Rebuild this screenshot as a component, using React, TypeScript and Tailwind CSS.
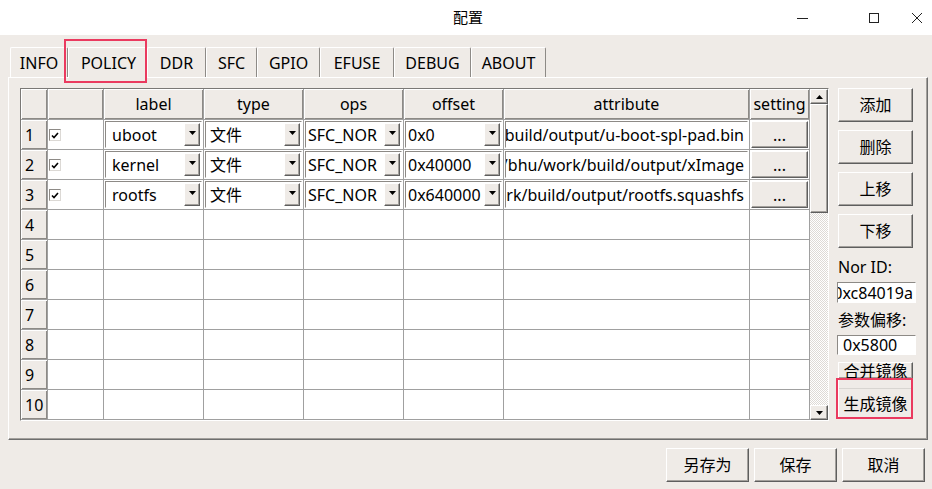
import React from 'react'

const FONT = "font-['Noto_Sans','Noto_Sans_CJK_SC',sans-serif]"
const RAISED =
  'bg-[#efebe7] border border-t-white border-l-white border-r-[#5e5e5e] border-b-[#5e5e5e] shadow-[inset_-1px_-1px_0_#a3a09c]'
const SUNKEN =
  'bg-white border border-t-[#8d8a86] border-l-[#8d8a86] border-r-white border-b-white'

const rows = [
  { label: 'uboot', type: '文件', ops: 'SFC_NOR', offset: '0x0', attr: '/home/bhu/work/build/output/u-boot-spl-pad.bin' },
  { label: 'kernel', type: '文件', ops: 'SFC_NOR', offset: '0x40000', attr: '/home/bhu/work/build/output/xImage' },
  { label: 'rootfs', type: '文件', ops: 'SFC_NOR', offset: '0x640000', attr: '/home/bhu/work/build/output/rootfs.squashfs' },
]

const tabs = [
  { name: 'INFO', w: 'w-[58px]' },
  { name: 'POLICY', w: 'w-[79px]', active: true },
  { name: 'DDR', w: 'w-[59px]' },
  { name: 'SFC', w: 'w-[51px]' },
  { name: 'GPIO', w: 'w-[63px]' },
  { name: 'EFUSE', w: 'w-[74px]' },
  { name: 'DEBUG', w: 'w-[77px]' },
  { name: 'ABOUT', w: 'w-[75px]' },
]

function Tri({ up }: { up?: boolean }) {
  return (
    <svg width="7" height="4" viewBox="0 0 7 4">
      <path d={up ? 'M0 4h7L3.5 0z' : 'M0 0h7L3.5 4z'} fill="#000" />
    </svg>
  )
}

function Combo({ text, pad }: { text: string; pad: string }) {
  return (
    <div className={`h-full flex ${SUNKEN}`}>
      <div className={`flex-1 min-w-0 ${pad} flex items-center overflow-hidden whitespace-nowrap`}>{text}</div>
      <div className={`w-[16px] shrink-0 my-px mr-px flex justify-center pt-[7px] ${RAISED}`}>
        <Tri />
      </div>
    </div>
  )
}

function Check() {
  return (
    <div className="w-[12px] h-[12px] bg-white border border-t-[#8d8a86] border-l-[#8d8a86] border-r-[#dcd9d5] border-b-[#dcd9d5] flex items-center justify-center">
      <svg width="8" height="7" viewBox="0 0 8 7">
        <path d="M1 3.5l2 2L7 1" stroke="#000" strokeWidth="1.6" fill="none" />
      </svg>
    </div>
  )
}

function Table() {
  const head = 'border-r border-b border-[#a0a0a0] shadow-[inset_1px_1px_0_#fff,inset_-1px_-1px_0_#8d8a86] bg-[#efebe7]'
  const cell = 'border-r border-b border-[#a0a0a0] bg-white'
  return (
    <div className="flex w-[809px] h-[333px] border border-t-[#7a7875] border-l-[#7a7875] border-r-white border-b-white">
      <div className="grid grid-cols-[27px_56px_100px_100px_100px_100px_246px_60px] grid-rows-[31px_repeat(10,30px)]">
        <div className={head} />
        <div className={head} />
        {['label', 'type', 'ops', 'offset', 'attribute', 'setting'].map((h) => (
          <div key={h} className={`${head} flex items-center justify-center`}>
            {h}
          </div>
        ))}
        {Array.from({ length: 10 }).map((_, i) => {
          const r = rows[i]
          return (
            <React.Fragment key={i}>
              <div className={`${head} flex items-center pl-[4px]`}>{i + 1}</div>
              {r ? (
                <>
                  <div className={`${cell} pl-px pt-[9px]`}>
                    <Check />
                  </div>
                  <div className={`${cell} p-px`}>
                    <Combo text={r.label} pad="pl-[6px]" />
                  </div>
                  <div className={`${cell} p-px`}>
                    <Combo text={r.type} pad="pl-[4px]" />
                  </div>
                  <div className={`${cell} p-px`}>
                    <Combo text={r.ops} pad="pl-[2px]" />
                  </div>
                  <div className={`${cell} p-px`}>
                    <Combo text={r.offset} pad="pl-[2px]" />
                  </div>
                  <div className={`${cell} p-px`}>
                    <div className={`h-full flex items-center justify-end overflow-hidden whitespace-nowrap pr-[3px] ${SUNKEN}`}>
                      {r.attr}
                    </div>
                  </div>
                  <div className={`${cell} p-px bg-[#efebe7]`}>
                    <div className={`h-full flex items-center justify-center ${RAISED}`}>...</div>
                  </div>
                </>
              ) : (
                Array.from({ length: 7 }).map((__, j) => <div key={j} className={cell} />)
              )}
            </React.Fragment>
          )
        })}
      </div>
      <div className="w-[18px] flex flex-col">
        <div className={`h-[15px] flex items-center justify-center ${RAISED}`}>
          <Tri up />
        </div>
        <div className={`h-[109px] ${RAISED}`} />
        <div className="flex-1 bg-[repeating-conic-gradient(#dedad6_0_25%,#ffffff_0_50%)] bg-[length:2px_2px]" />
        <div className={`h-[15px] flex items-center justify-center ${RAISED}`}>
          <Tri />
        </div>
      </div>
    </div>
  )
}

function SideButton({ text }: { text: string }) {
  return <div className={`h-[34px] flex items-center justify-center ${RAISED}`}>{text}</div>
}

export default function App() {
  return (
    <div className={`w-[932px] h-[489px] bg-[#efebe7] flex flex-col text-[16px] text-black overflow-hidden ${FONT}`}>
      {/* title bar */}
      <div className="relative h-[35px] bg-white flex items-center justify-center text-[15px]">
        <span className="ml-[4px]">配置</span>
        <div className="absolute right-0 top-0 h-full flex items-center">
          <svg width="12" height="12" viewBox="0 0 12 12" className="mr-[59px]">
            <path d="M0 6.5h11" stroke="#222" strokeWidth="1" />
          </svg>
          <svg width="12" height="12" viewBox="0 0 12 12" className="mr-[31px]">
            <rect x="1.5" y="1.5" width="9" height="9" stroke="#222" strokeWidth="1" fill="none" />
          </svg>
          <svg width="12" height="12" viewBox="0 0 12 12" className="mr-[9px]">
            <path d="M1 1l10 10M11 1L1 11" stroke="#222" strokeWidth="1" />
          </svg>
        </div>
      </div>

      {/* tabs */}
      <div className="h-[42px] flex items-end pl-[10px]">
        {tabs.map((t) => (
          <div
            key={t.name}
            className={`relative ${t.w} h-[30px] flex items-center justify-center rounded-t-[2px] border border-b-0 border-t-white border-l-white border-r-[#8d8a86] ${
              t.active ? 'h-[31px] -mb-px z-10 bg-[#efebe7] pl-[2px]' : ''
            }`}
          >
            {t.name}
            {t.active && (
              <div className="absolute left-[-5px] right-[-1px] top-[-9px] bottom-[-5px] border-2 border-[#ea3a5f]" />
            )}
          </div>
        ))}
      </div>

      {/* pane */}
      <div className="ml-[8px] w-[920px] h-[363px] border border-t-white border-l-white border-r-[#6e6e6e] border-b-[#6e6e6e] shadow-[inset_-1px_-1px_0_#a3a09c] pl-[11px] pt-[10px] flex">
        <Table />
        <div className="ml-[9px] w-[75px] flex flex-col">
          <SideButton text="添加" />
          <div className="h-[8px]" />
          <SideButton text="删除" />
          <div className="h-[8px]" />
          <SideButton text="上移" />
          <div className="h-[8px]" />
          <SideButton text="下移" />
          <div className="mt-[6px] h-[26px] leading-[26px]">Nor ID:</div>
          <div className={`mt-[2px] -ml-px w-[79px] h-[21px] flex items-center justify-end overflow-hidden whitespace-nowrap pr-[2px] ${SUNKEN}`}>
            0xc84019a
          </div>
          <div className="mt-[4px] h-[26px] leading-[26px]">参数偏移:</div>
          <div className={`mt-[2px] -ml-px w-[79px] h-[20px] flex items-center pl-[5px] ${SUNKEN}`}>0x5800</div>
          <div className={`mt-[7px] h-[16px] overflow-hidden flex justify-center ${RAISED} border-b-0`}>
            <span className="leading-[22px] mt-[-3px]">合并镜像</span>
          </div>
          <div className={`relative h-[41px] pt-[9px] ${RAISED}`}>
            <div className="h-full flex items-center justify-center border-t border-[#d8d5d1]">生成镜像</div>
            <div className="absolute left-[-3px] right-[-1px] top-[-1px] bottom-[-1px] border-2 border-[#ea3a5f]" />
          </div>
        </div>
      </div>

      {/* bottom buttons */}
      <div className="mt-[8px] flex justify-end gap-[5px] pr-[7px]">
        {['另存为', '保存', '取消'].map((b) => (
          <div key={b} className={`w-[83px] h-[34px] flex items-center justify-center ${RAISED}`}>
            {b}
          </div>
        ))}
      </div>
    </div>
  )
}
